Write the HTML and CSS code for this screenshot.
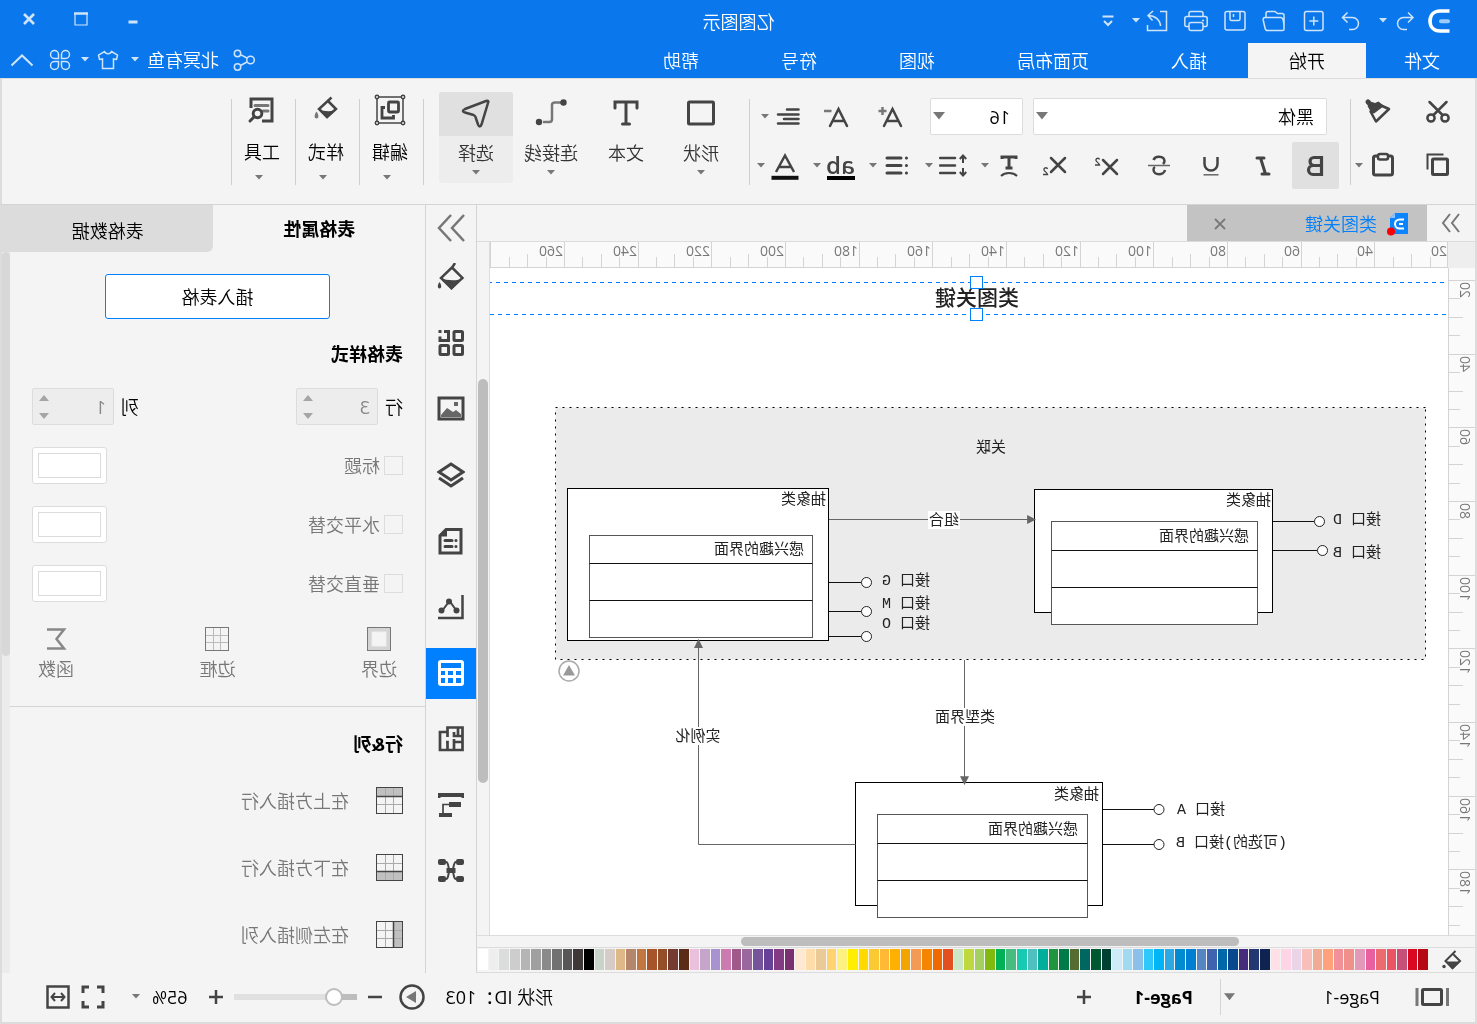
FILE: index.html
```html
<!DOCTYPE html>
<html lang="zh-CN">
<head>
<meta charset="utf-8">
<title>亿图图示</title>
<link rel="stylesheet" href="styles.css">
</head>
<body>
<div class="app">
  <header class="header">
    <div class="titlebar">
      <div class="quick">
        <svg class="logo" viewBox="0 0 24 24" width="24" height="24"><path d="M1.500 2H11C17.500 2 21 6.500 21 12S17.500 22 11 22H1.500" fill="none" stroke="#fff" stroke-width="3.600"/><path d="M3 12.200H10" stroke="#9fcbf9" stroke-width="4" stroke-linecap="round"/></svg>
        <button class="tb" aria-label="撤销"><svg viewBox="0 0 24 24" width="24" height="24"><path d="M9 3.500L4 8.500L9 13.500M4.500 8.500H13.500A6 6 0 0 1 13.500 20.500H10"/></svg></button>
        <button class="tb" aria-label="撤销列表"><svg class="caret-light" viewBox="0 0 8 5" width="8" height="5"><path d="M0 0H8L4 4.500Z"/></svg></button>
        <button class="tb" aria-label="恢复"><svg viewBox="0 0 24 24" width="24" height="24"><path d="M15.500 3.500L20.500 8.500L15.500 13.500M20 8.500H10.500A6 6 0 0 0 10.500 20.500H14"/></svg></button>
        <button class="tb" aria-label="新建"><svg viewBox="0 0 24 24" width="24" height="24"><rect x="3" y="2.500" width="18.500" height="19" rx="2"/><path d="M12.200 7.500V16.500M7.700 12H16.700"/></svg></button>
        <button class="tb" aria-label="打开"><svg viewBox="0 0 24 24" width="24" height="24"><path d="M2 20.500V6.500C2 5 3 4.500 4 4.500H8.500L11 2.500H18C19.500 2.500 20 3.500 20 4.500V8M2 20.500C2 14 3 8.500 5 8.500H21C23 8.500 23 10 22.700 11.500L21 19C20.700 20.500 20 21.500 18.500 21.500H3.500C2.500 21.500 2 21 2 20.500Z"/></svg></button>
        <button class="tb" aria-label="保存"><svg viewBox="0 0 24 24" width="24" height="24"><rect x="2" y="2.500" width="20" height="18.500" rx="2"/><path d="M7 3V10C7 11 7.500 11.500 8.500 11.500H15.500C16.500 11.500 17 11 17 10V3M13.500 5V8"/></svg></button>
        <button class="tb" aria-label="打印"><svg viewBox="0 0 24 24" width="24" height="24"><path d="M5 7.500V4.500C5 3 6 2.500 7 2.500H17C18.500 2.500 19 3.500 19 4.500V7.500M5 17.500H2.500C1.500 17.500 .800 17 .800 16V9.500C.800 8 1.500 7.500 3 7.500H21C22.500 7.500 23.200 8.500 23.200 9.500V16C23.200 17 22.500 17.500 21.500 17.500H19M4 11.500H6"/><rect x="5" y="13.500" width="14" height="8" rx="2"/></svg></button>
        <button class="tb" aria-label="导出"><svg viewBox="0 0 24 24" width="24" height="24"><path d="M9 2.500H2.500V21.500H21.500V16M8.500 17C9 10.500 14 6.500 21 6.500M16 2L21 6.500L16.500 11.500"/></svg></button>
        <button class="tb" aria-label="导出列表"><svg class="caret-light" viewBox="0 0 8 5" width="8" height="5"><path d="M0 0H8L4 4.500Z"/></svg></button>
        <button class="tb" aria-label="更多"><svg viewBox="0 0 12 12" width="12" height="12"><path d="M.500 1.500H11.500M2 6L6 10L10 6" stroke-width="2"/></svg></button>
      </div>
      <h1 class="title">亿图图示</h1>
      <div class="winctl">
        <button class="tb" aria-label="最小化"><svg viewBox="0 0 14 14" width="14" height="14"><path d="M2.500 10H11.500" stroke-width="3"/></svg></button>
        <button class="tb" aria-label="最大化"><svg viewBox="0 0 14 14" width="14" height="14"><path d="M1 1V13H13V1" stroke-width="1.200"/><path d="M0 1.500H14" stroke-width="2.500"/></svg></button>
        <button class="tb" aria-label="关闭"><svg viewBox="0 0 14 14" width="14" height="14"><path d="M2 2L12 12M12 2L2 12" stroke-width="2.600"/></svg></button>
      </div>
    </div>
    <nav class="menubar">
      <a class="menu menu-file" href="#file">文件</a>
      <a class="menu menu-on" href="#home">开始</a>
      <a class="menu" href="#insert">插入</a>
      <a class="menu" href="#layout">页面布局</a>
      <a class="menu" href="#view">视图</a>
      <a class="menu" href="#symbol">符号</a>
      <a class="menu" href="#help">帮助</a>
      <div class="account">
        <button class="tb" aria-label="分享"><svg viewBox="0 0 22 22" width="22" height="22"><circle cx="4.500" cy="11" r="3.800"/><circle cx="17.500" cy="4.500" r="3.200"/><circle cx="17.500" cy="18" r="3.200"/><path d="M8 9L14.500 5.700M8 13L14.500 16.500"/></svg></button>
        <button class="tb user">北冥有鱼 <svg class="caret-light" viewBox="0 0 8 5" width="8" height="5"><path d="M0 0H8L4 4.500Z"/></svg></button>
        <button class="tb skin" aria-label="皮肤"><svg viewBox="0 0 22 22" width="22" height="22"><path d="M7.500 2.500L1.500 6L2.500 10.500L5.500 10V19.500H16.500V10L19.500 10.500L20.500 6L14.500 2.500C13.500 5.500 8.500 5.500 7.500 2.500Z"/></svg> <svg class="caret-light" viewBox="0 0 8 5" width="8" height="5"><path d="M0 0H8L4 4.500Z"/></svg></button>
        <button class="tb" aria-label="应用"><svg viewBox="0 0 22 22" width="22" height="22"><path d="M9.500 9.500H5.500A4 4 0 1 1 9.500 5.500ZM12.500 9.500V5.500A4 4 0 1 1 16.500 9.500ZM9.500 12.500V16.500A4 4 0 1 1 5.500 12.500ZM12.500 12.500H16.500A4 4 0 1 1 12.500 16.500Z"/></svg></button>
        <button class="tb fold" aria-label="收起功能区"><svg viewBox="0 0 24 14" width="24" height="14"><path d="M1.500 12.500L12 2.500L22.500 12.500" stroke-width="2"/></svg></button>
      </div>
    </nav>
  </header>

  <section class="ribbon">
    <div class="clip">
      <div class="clip-row">
        <button class="tool" aria-label="剪切"><svg viewBox="0 0 28 28" width="28" height="28"><g class="ln"><circle cx="7" cy="20" r="3.600"/><circle cx="21" cy="20" r="3.600"/><path d="M5.500 4L18.500 17M22.500 4L9.500 17" stroke-linecap="round"/></g></svg></button>
        <button class="tool painter" aria-label="格式刷"><svg viewBox="0 0 28 28" width="28" height="28"><path class="ln" d="M3 11L12 7L21.500 13.500L16 23.500Z" stroke-linejoin="round"/><path class="fl" d="M8 8L13.500 3.500L17 5L20 4L24.500 8L22 12.500L21.500 15L18 15.500Z"/><path d="M21 7L24 4" stroke="#444" stroke-width="5" stroke-linecap="round"/></svg></button>
      </div>
      <div class="clip-row clip-low">
        <button class="tool" aria-label="复制"><svg viewBox="0 0 28 28" width="28" height="28"><rect class="ln" x="4.500" y="8" width="15" height="15.500" rx="1" stroke-width="3"/><path class="ln" d="M8.500 3.500H24.500V18.500" stroke-width="2"/></svg></button>
        <button class="tool split" aria-label="粘贴"><svg viewBox="0 0 28 28" width="28" height="28"><rect class="ln" x="4.500" y="5" width="19" height="19" rx="2" stroke-width="3"/><rect x="9" y="3" width="10" height="5.500" rx="2" fill="#f4f4f4" stroke="#444" stroke-width="2.500"/></svg><svg class="caret" viewBox="0 0 8 5" width="8" height="5"><path d="M0 0H8L4 4.500Z"/></svg></button>
      </div>
    </div>
    <div class="rule"></div>
    <div class="font">
      <div class="font-top">
        <label class="combo combo-face"><select aria-label="字体"><option>黑体</option></select><svg class="caret" viewBox="0 0 12 8" width="12" height="8"><path d="M0 0H12L6 7.500Z"/></svg></label>
        <label class="combo combo-size"><select aria-label="字号"><option>16</option></select><svg class="caret" viewBox="0 0 12 8" width="12" height="8"><path d="M0 0H12L6 7.500Z"/></svg></label>
        <button class="tool" aria-label="增大字号"><svg viewBox="0 0 28 28" width="28" height="28"><path class="ln" d="M4 23L12.500 6L21 23M7 18H18" stroke-linecap="round"/><path d="M22.500 4V12M18.500 8H26.500" stroke="#777" stroke-width="2.500"/></svg></button>
        <button class="tool dec" aria-label="减小字号"><svg viewBox="0 0 28 28" width="28" height="28"><path class="ln" d="M4 23L12.500 6L21 23M7 18H18" stroke-linecap="round"/><path d="M19.500 8H27" stroke="#777" stroke-width="2.500"/></svg></button>
        <button class="tool split" aria-label="对齐"><svg viewBox="0 0 28 28" width="28" height="28"><path class="ln" d="M4.500 6.500H16M4.500 11.500H25M4.500 16H19M4.500 20.500H25" stroke-linecap="round"/></svg><svg class="caret" viewBox="0 0 8 5" width="8" height="5"><path d="M0 0H8L4 4.500Z"/></svg></button>
      </div>
      <div class="font-low">
        <button class="bold" aria-label="加粗"><svg viewBox="0 0 28 28" width="28" height="28"><path class="ln" d="M7.500 5.500H15A4 4 0 0 1 15 13.500H7.500ZM7.500 13.500H16A4.500 4.500 0 0 1 16 22.500H7.500Z" stroke-width="3.200"/></svg></button>
        <button class="tool" aria-label="斜体"><svg viewBox="0 0 28 28" width="28" height="28"><path class="ln" d="M13 6H20M8 22H15M16.500 6L11.500 22" stroke-width="3" stroke-linecap="round"/></svg></button>
        <button class="tool" aria-label="下划线"><svg viewBox="0 0 28 28" width="28" height="28"><path class="ln" d="M7.500 5V12A6.500 6.500 0 0 0 20.500 12V5"/><path d="M6.500 22.800H21.500" stroke="#666" stroke-width="1.500"/></svg></button>
        <button class="tool" aria-label="删除线"><svg viewBox="0 0 28 28" width="28" height="28"><path class="ln" d="M19.500 8C18 3.500 9 3.500 8.500 9C8.500 10 9 11 10 12M8 18C9 23.500 19.500 24 19.500 17.500C19.500 16 19 15.500 18 15"/><path d="M3 13.500H25" stroke="#666" stroke-width="1.500"/></svg></button>
        <button class="tool" aria-label="上标"><svg viewBox="0 0 28 28" width="28" height="28"><path class="ln" d="M4 8L18 22M18 8L4 22" stroke-linecap="round"/><path class="ln" d="M21.500 7.500C22 5.500 25.500 6 25 8.500C24.500 10 22 11 21.500 13H26" stroke-width="1.300"/></svg></button>
        <button class="tool" aria-label="下标"><svg viewBox="0 0 28 28" width="28" height="28"><path class="ln" d="M4 6L18 20M18 6L4 20" stroke-linecap="round"/><path class="ln" d="M21.500 17C22 15 25.500 15.500 25 18C24.500 19.500 22 20.500 21.500 22.500H26" stroke-width="1.300"/></svg></button>
        <button class="tool split" aria-label="文字方向"><svg viewBox="0 0 28 28" width="28" height="28"><path class="ln" d="M7 7V5H21V7M14 5V16M10.500 16H17.500" stroke-width="3"/><path class="ln" d="M6 24C10 20 18 20 22 24" stroke-width="2"/></svg><svg class="caret" viewBox="0 0 8 5" width="8" height="5"><path d="M0 0H8L4 4.500Z"/></svg></button>
        <button class="tool split" aria-label="行距"><svg viewBox="0 0 28 28" width="28" height="28"><path class="ln" d="M12 6H27M12 13.500H27M12 21H27" stroke-linecap="round"/><path class="ln" d="M4 4V11M4 16V23M.800 7L4 3.500L7.200 7M.800 20L4 23.500L7.200 20" stroke-width="2"/></svg><svg class="caret" viewBox="0 0 8 5" width="8" height="5"><path d="M0 0H8L4 4.500Z"/></svg></button>
        <button class="tool split" aria-label="项目符号"><svg viewBox="0 0 28 28" width="28" height="28"><path class="ln" d="M10 6H24M10 13.500H24M10 21H24M4.500 6H4.600M4.500 13.500H4.600M4.500 21H4.600" stroke-width="3" stroke-linecap="round"/></svg><svg class="caret" viewBox="0 0 8 5" width="8" height="5"><path d="M0 0H8L4 4.500Z"/></svg></button>
        <button class="tool split" aria-label="突出显示"><span class="hl">ab</span><svg class="caret" viewBox="0 0 8 5" width="8" height="5"><path d="M0 0H8L4 4.500Z"/></svg></button>
        <button class="tool split" aria-label="字体颜色"><svg viewBox="0 0 28 28" width="28" height="28"><path class="ln" d="M5 20L14 3.500L23 20M8.500 15H19.500"/><path d="M.500 25.800H27.500" stroke="#111" stroke-width="4"/></svg><svg class="caret" viewBox="0 0 8 5" width="8" height="5"><path d="M0 0H8L4 4.500Z"/></svg></button>
      </div>
    </div>
    <div class="rule"></div>
    <div class="bigs">
      <button class="big"><svg viewBox="0 0 32 32" width="32" height="32"><rect class="ln" x="3.500" y="5" width="25" height="22" stroke-width="3" rx="1"/></svg><span>形状</span><svg class="caret" viewBox="0 0 8 5" width="8" height="5"><path d="M0 0H8L4 4.500Z"/></svg></button>
      <button class="big"><svg viewBox="0 0 32 32" width="32" height="32"><path class="ln" d="M5 11V5H27V11M16 5V27M12.500 27H19.500" stroke-width="3" stroke-linecap="round"/></svg><span>文本</span></button>
      <button class="big"><svg viewBox="0 0 32 32" width="32" height="32"><path d="M6 5.500H12C14 5.500 15 6.500 15 8V22C15 24 16 25 17.500 25H24" fill="none" stroke="#777" stroke-width="2.500"/><circle class="fl" cx="3.500" cy="5.500" r="3.200"/><circle class="fl" cx="28" cy="25" r="3.200"/></svg><span>连接线</span><svg class="caret" viewBox="0 0 8 5" width="8" height="5"><path d="M0 0H8L4 4.500Z"/></svg></button>
      <button class="big big-on"><svg viewBox="0 0 32 32" width="32" height="32"><path class="ln" d="M4 6C3 4 4 3.500 6 4L27 12C30 13.500 29.500 15 27 15.500L18.500 18C17.500 18.500 17 19 16.500 20L14 27.500C13 30 11.500 30 10.500 27.500Z" stroke-width="2.500"/></svg><span>选择</span><svg class="caret" viewBox="0 0 8 5" width="8" height="5"><path d="M0 0H8L4 4.500Z"/></svg></button>
    </div>
    <div class="cmds">
      <button class="cmd"><svg viewBox="0 0 32 32" width="32" height="32"><g class="ln"><rect x="3" y="3" width="26" height="26" stroke-width="1.500"/><rect x="7.500" y="8" width="10" height="10" rx="1" stroke-width="2.800"/><path d="M12.500 21V24H24V13.500H21" stroke-width="2.800"/></g><g fill="#f4f4f4" stroke="#444" stroke-width="1.500"><circle cx="3" cy="3" r="1.700"/><circle cx="29" cy="3" r="1.700"/><circle cx="3" cy="29" r="1.700"/><circle cx="29" cy="29" r="1.700"/></g></svg><span>编辑</span><svg class="caret" viewBox="0 0 8 5" width="8" height="5"><path d="M0 0H8L4 4.500Z"/></svg></button>
      <button class="cmd"><svg viewBox="0 0 32 32" width="32" height="32"><path class="ln" d="M10.500 3.500L23 15L15 23L6 15L13.500 7.500"/><path class="fl" d="M5.500 15.500C10 18 18 17.500 23.500 15.500L15 24.500Z"/><path d="M25.500 17.500C28 21 28 24.500 25.500 24.500S23 21 25.500 17.500Z" fill="#777"/></svg><span>样式</span><svg class="caret" viewBox="0 0 8 5" width="8" height="5"><path d="M0 0H8L4 4.500Z"/></svg></button>
      <button class="cmd"><svg viewBox="0 0 32 32" width="32" height="32"><path class="ln" d="M16 27H6V5H27V14" stroke-width="3"/><path d="M10 11.500H23M10 17H15" stroke="#777" stroke-width="3" stroke-linecap="round"/><circle class="ln" cx="20.500" cy="19.500" r="4.300" stroke-width="3"/><path class="ln" d="M24 23L28 27" stroke-width="3" stroke-linecap="round"/></svg><span>工具</span><svg class="caret" viewBox="0 0 8 5" width="8" height="5"><path d="M0 0H8L4 4.500Z"/></svg></button>
      <div class="rule"></div>
    </div>
  </section>

  <main class="main">
    <section class="editor">
      <div class="doctabs">
        <button class="more" aria-label="展开符号库"><svg viewBox="0 0 22 22" width="22" height="22"><path d="M3 2L10 11L3 20M12 2L19 11L12 20" fill="none" stroke="#777" stroke-width="2"/></svg></button>
        <div class="doctab">
          <svg viewBox="0 0 24 24" width="24" height="24"><path d="M4 1H16L21 6V22H4C3 22 3 21.500 3 21V2C3 1.500 3 1 4 1Z" fill="#0a84ff"/><path d="M16 1L21 6H16Z" fill="#8cc4ff"/><path d="M7 7.500H11.500A4.500 4.500 0 0 1 11.500 16.500H7" fill="none" stroke="#fff" stroke-width="2"/><path d="M8 12H12" stroke="#fff" stroke-width="2"/><circle cx="20" cy="19.500" r="4" fill="#f00"/></svg>
          <a href="#doc">类图关键</a>
          <button class="close" aria-label="关闭标签"><svg viewBox="0 0 12 12" width="12" height="12"><path d="M1 1L11 11M11 1L1 11" stroke="#777" stroke-width="1.800"/></svg></button>
        </div>
      </div>
      <div class="stage">
        <div class="corner"></div>
        <svg class="ruler-h" id="rulerH"></svg>
        <svg class="ruler-v" id="rulerV"></svg>
        <div class="canvas">
          <svg class="diagram" viewBox="29 268 958 667" width="958" height="667">
            <defs>
              <marker id="tip" viewBox="0 0 8 8" refX="7" refY="4" markerWidth="9" markerHeight="9" markerUnits="userSpaceOnUse" orient="auto"><path d="M0 0L8 4L0 8Z" fill="#666"/></marker>
            </defs>
            <path class="guide" d="M33 282.500H987M31 314.500H987"/>
            <text class="heading" x="500" y="305" text-anchor="middle">类图关键</text>
            <g class="grip"><rect x="494.500" y="276.500" width="12" height="12"/><rect x="494.500" y="308.500" width="12" height="12"/></g>
            <rect class="zone" x="51.500" y="407.500" width="870" height="252"/>
            <text x="486" y="452" text-anchor="middle">关联</text>

            <rect class="outer" x="204.500" y="489.500" width="238" height="123"/>
            <text x="206" y="505">抽象类</text>
            <rect class="inner" x="219.500" y="521.500" width="206" height="103"/>
            <path class="row" d="M219.500 550.500H425.500M219.500 587.500H425.500"/>
            <text x="228" y="541">感兴趣的界面</text>
            <path class="row" d="M163 521.500H204M160 550.500H204"/>
            <circle class="ball" cx="157.500" cy="521.500" r="5"/><circle class="ball" cx="154.500" cy="550.500" r="5"/>
            <text x="96" y="524">接口 D</text><text x="96" y="557">接口 B</text>

            <rect class="outer" x="648.500" y="488.500" width="261" height="152"/>
            <text x="651" y="504">抽象类</text>
            <rect class="inner" x="664.500" y="535.500" width="223" height="102"/>
            <path class="row" d="M664.500 563.500H887.500M664.500 600.500H887.500"/>
            <text x="673" y="554">感兴趣的界面</text>
            <path class="row" d="M616 582.500H648M616 611.500H648M616 636.500H648"/>
            <circle class="ball" cx="610.500" cy="582.500" r="5"/><circle class="ball" cx="610.500" cy="611.500" r="5"/><circle class="ball" cx="610.500" cy="636.500" r="5"/>
            <text x="547" y="585">接口 G</text><text x="547" y="608">接口 M</text><text x="547" y="628">接口 O</text>

            <rect class="outer" x="374.500" y="782.500" width="247" height="123"/>
            <text x="378" y="799">抽象类</text>
            <rect class="inner" x="389.500" y="814.500" width="210" height="103"/>
            <path class="row" d="M389.500 843.500H599.500M389.500 880.500H599.500"/>
            <text x="399" y="834">感兴趣的界面</text>
            <path class="row" d="M323 809.500H374M323 844.500H374"/>
            <circle class="ball" cx="318" cy="809.500" r="5"/><circle class="ball" cx="318" cy="844.500" r="5"/>
            <text x="252" y="814">接口 A</text><text x="190" y="847">(可选的)接口 B</text>

            <g class="link">
              <path d="M648 519.500H442"/>
              <path d="M512.500 660V784"/>
              <path d="M621.500 844.500H778.500V640"/>
            </g>
            <g class="tag"><rect x="517" y="511" width="32" height="18"/><rect x="481" y="708" width="62" height="18"/><rect x="755" y="727" width="48" height="18"/></g>
            <text x="533" y="525" text-anchor="middle">组合</text>
            <text x="512" y="722" text-anchor="middle">类型界面</text>
            <text x="779" y="741" text-anchor="middle">实例化</text>
            <circle class="badge" cx="908" cy="671" r="10"/><path d="M902 675.500L908 665L914 675.500Z" fill="#999"/>
          </svg>
        </div>
        <div class="vscroll"><div class="vthumb"></div></div>
      </div>
      <div class="hscroll"><div class="hthumb"></div></div>
      <div class="palette">
        <button class="bucket" aria-label="填充"><svg viewBox="0 0 24 24" width="24" height="24"><path class="ln" d="M8.500 2L18.500 12L11.500 19L4 12L10.500 5.500" stroke-width="2"/><path class="fl" d="M3.500 12.500H19L11.500 20.500Z"/><circle class="fl" cx="20" cy="17.500" r="1.700"/></svg></button>
        <div class="swatches" id="swatches"></div>
      </div>
    </section>

    <nav class="rail">
      <button class="rail-fold" aria-label="折叠面板"><svg viewBox="0 0 28 28" width="28" height="28"><path d="M1 1L13 14L1 27M14 1L26 14L14 27" fill="none" stroke="#777" stroke-width="2.500"/></svg></button>
      <button aria-label="填充"><svg viewBox="0 0 28 28" width="28" height="28"><path class="ln" d="M10 0L12.500 4L24 15L13.500 25L2.500 15L13 4.500"/><path class="fl" d="M2 15C8 18.500 18 17.500 25 15L13.500 27Z"/><path class="fl" d="M25.500 19C28 22.500 27.500 25.500 25.500 25.500S23 22.500 25.500 19Z"/></svg></button>
      <button aria-label="符号"><svg viewBox="0 0 28 28" width="28" height="28"><g class="ln thick"><rect x="2.500" y="2.500" width="8.500" height="9" rx="1"/><rect x="2.500" y="16.500" width="8.500" height="9" rx="1"/><rect x="16.500" y="16.500" width="8.500" height="9" rx="1"/><path d="M21 2.500H16.500V11.500H25V7.500M23.500 2.500H26.500"/></g></svg></button>
      <button aria-label="图片"><svg viewBox="0 0 28 28" width="28" height="28"><rect class="ln" x="2" y="3" width="24" height="21" stroke-width="3"/><path d="M4 21V19L9 15L12 17L18 13L24 20V22H4Z" fill="#666"/><rect x="7" y="7" width="4" height="4" fill="#666"/></svg></button>
      <button aria-label="图层"><svg viewBox="0 0 28 28" width="28" height="28"><path class="ln" d="M14 3L26 11L14 19L2 11ZM2 17L14 25L26 17" stroke-width="3"/></svg></button>
      <button aria-label="备注"><svg viewBox="0 0 28 28" width="28" height="28"><path class="ln" d="M4 2.500H19L25 8.500V26H4Z" stroke-width="3"/><path class="fl" d="M18 2V9.500H25Z"/><path class="ln" d="M9 13.500H9.100M13 13.500H20M9 19.500H9.100M13 19.500H20" stroke-width="3" stroke-linecap="round"/></svg></button>
      <button aria-label="图表"><svg viewBox="0 0 28 28" width="28" height="28"><path class="ln" d="M9 17L15.500 8L23 18" stroke-width="2"/><path class="ln" d="M2.500 2V25H27"/><circle class="fl" cx="8.500" cy="17.500" r="3"/><circle class="fl" cx="16" cy="8.500" r="3"/><circle class="fl" cx="23.500" cy="17.500" r="3"/></svg></button>
      <button class="rail-on" aria-label="表格"><svg viewBox="0 0 28 28" width="28" height="28"><rect x="1" y="1" width="26" height="26" rx="3" fill="#fff"/><path d="M4 4H24V9H4ZM4 12H9V16H4ZM12 12H17V16H12ZM20 12H24V16H20ZM4 19H9V24H4ZM12 19H17V24H12ZM20 19H24V24H20Z" fill="#0080ff"/></svg></button>
      <button aria-label="平面图"><svg viewBox="0 0 28 28" width="28" height="28"><path class="ln" d="M2.500 2.500H17.500V7H25V25H2.500ZM2.500 11H11V7M17.500 7V12M7 3V11M2.500 17H11V14M11 17V25M17.500 25V17H19" stroke-width="2.700"/></svg></button>
      <button aria-label="甘特图"><svg viewBox="0 0 28 28" width="28" height="28"><path class="fl" d="M1 2H27V7H25L24 6H4L3 7H1ZM4 11H16V16H4ZM13 22H26V26H13Z"/><path class="ln" d="M16 13.500H22V22" stroke-width="1.700"/></svg></button>
      <button aria-label="思维导图"><svg viewBox="0 0 28 28" width="28" height="28"><path class="ln" d="M6 5H9C12 5 11 13 13 13.500H15C17 13.500 16 5 19 5H23M6 22H9C12 22 11 14 13 13.500M23 22H19C16 22 17 14 15 13.500" stroke-width="2"/><rect class="fl" x="1" y="2" width="8" height="6" rx="2"/><rect class="fl" x="19" y="2" width="8" height="6" rx="2"/><rect class="fl" x="1" y="19" width="8" height="6" rx="2"/><rect class="fl" x="19" y="19" width="8" height="6" rx="2"/><rect class="fl" x="9.500" y="11" width="9" height="5"/></svg></button>
    </nav>

    <aside class="panel">
      <div class="ptabs"><button class="ptab ptab-on">表格属性</button><button class="ptab">表格数据</button></div>
      <div class="pbody">
        <div class="pcontent">
          <div class="block">
            <button class="insert">插入表格</button>
            <h2>表格样式</h2>
            <div class="spins">
              <label class="spin">行<span class="spin-box"><input type="number" value="3" disabled><svg viewBox="0 0 10 24" width="10" height="24"><path d="M0 6L5 0L10 6ZM0 18L5 24L10 18Z" fill="#a5a5a5"/></svg></span></label>
              <label class="spin">列<span class="spin-box"><input type="number" value="1" disabled><svg viewBox="0 0 10 24" width="10" height="24"><path d="M0 6L5 0L10 6ZM0 18L5 24L10 18Z" fill="#a5a5a5"/></svg></span></label>
            </div>
            <div class="opt"><label><input type="checkbox" disabled>标题</label><button class="color" aria-label="标题颜色"><span></span></button></div>
            <div class="opt"><label><input type="checkbox" disabled>水平交替</label><button class="color" aria-label="水平交替颜色"><span></span></button></div>
            <div class="opt"><label><input type="checkbox" disabled>垂直交替</label><button class="color" aria-label="垂直交替颜色"><span></span></button></div>
            <div class="trio">
              <button><svg viewBox="0 0 24 24" width="24" height="24"><rect x=".500" y=".500" width="23" height="23" fill="#d4d4d4" stroke="#777"/><rect x="5" y="5" width="14" height="14" fill="#f4f4f4" stroke="#eee"/></svg>边界</button>
              <button><svg viewBox="0 0 24 24" width="24" height="24"><path d="M1 8.500H23M1 15.500H23M8.500 1V23M15.500 1V23" stroke="#bbb"/><rect x=".500" y=".500" width="23" height="23" fill="none" stroke="#777"/></svg>边框</button>
              <button><svg viewBox="0 0 24 24" width="24" height="24"><path d="M21 2.500H4L11.500 12L4 21.500H21" fill="none" stroke="#888" stroke-width="2.500"/></svg>函数</button>
            </div>
          </div>
          <div class="block block-2">
            <h2>行&amp;列</h2>
            <button class="act"><svg viewBox="0 0 27 27" width="27" height="27"><rect x="1" y="1" width="25" height="9" fill="#c0c0c0"/><path d="M9.500 1V26M17.500 1V26M1 17.500H26" stroke="#aaa"/><path d="M0 9.500H27" stroke="#444" stroke-width="1.500"/><rect x=".500" y=".500" width="26" height="26" fill="none" stroke="#444"/></svg>在上方插入行</button>
            <button class="act"><svg viewBox="0 0 27 27" width="27" height="27"><rect x="1" y="17" width="25" height="9" fill="#c0c0c0"/><path d="M9.500 1V26M17.500 1V26M1 9.500H26" stroke="#aaa"/><path d="M0 17.500H27" stroke="#444" stroke-width="1.500"/><rect x=".500" y=".500" width="26" height="26" fill="none" stroke="#444"/></svg>在下方插入行</button>
            <button class="act"><svg viewBox="0 0 27 27" width="27" height="27"><rect x="1" y="1" width="9" height="25" fill="#c0c0c0"/><path d="M1 9.500H26M1 17.500H26M17.500 1V26" stroke="#aaa"/><path d="M9.500 0V27" stroke="#444" stroke-width="1.500"/><rect x=".500" y=".500" width="26" height="26" fill="none" stroke="#444"/></svg>在左侧插入列</button>
          </div>
        </div>
        <div class="pscroll"><div class="pthumb"></div></div>
      </div>
    </aside>
  </main>

  <footer class="status">
    <button class="pages" aria-label="页面视图"><svg viewBox="0 0 34 20" width="34" height="20"><rect x="7.500" y="2.500" width="19" height="15" fill="none" stroke="#444" stroke-width="3" rx="1"/><path d="M1.500 1V19M32 1V19" stroke="#777" stroke-width="3"/></svg></button>
    <label class="pagesel"><select aria-label="页面"><option>Page-1</option></select><svg class="caret" viewBox="0 0 12 8" width="11" height="8"><path d="M0 0H12L6 7.500Z"/></svg></label>
    <a class="page-on" href="#page1">Page-1</a>
    <button class="st" aria-label="新增页面"><svg viewBox="0 0 16 16" width="16" height="16"><path d="M8 1V15M1 8H15" stroke="#444" stroke-width="2.500"/></svg></button>
    <div class="info">
      <span class="shape-id">形状 <span class="num">ID：103</span></span>
      <button class="st" aria-label="演示"><svg viewBox="0 0 26 26" width="26" height="26"><circle cx="13" cy="13" r="11.500" fill="none" stroke="#444" stroke-width="2.500"/><path d="M9 7L19 13L9 19Z" fill="#777"/></svg></button>
      <button class="st out" aria-label="缩小"><svg viewBox="0 0 16 16" width="16" height="16"><path d="M1 8H15" stroke="#444" stroke-width="2.500"/></svg></button>
      <input class="zoom" type="range" min="0" max="100" value="14" aria-label="缩放">
      <button class="st" aria-label="放大"><svg viewBox="0 0 16 16" width="16" height="16"><path d="M8 1V15M1 8H15" stroke="#444" stroke-width="2.500"/></svg></button>
      <button class="pct">65% <svg class="caret" viewBox="0 0 8 5" width="8" height="5"><path d="M0 0H8L4 4.500Z"/></svg></button>
      <button class="st" aria-label="全屏"><svg viewBox="0 0 24 24" width="24" height="24"><path class="ln" d="M2 8V2H8M16 2H22V8M22 16V22H16M8 22H2V16" stroke-width="3"/></svg></button>
      <button class="st" aria-label="适合宽度"><svg viewBox="0 0 24 24" width="24" height="24"><rect class="ln" x="1.500" y="1.500" width="21" height="21" stroke-width="2.500"/><path class="ln" d="M6 12H18M9 8L5.500 12L9 16M15 8L18.500 12L15 16" stroke-width="2"/></svg></button>
    </div>
  </footer>
</div>
<script src="app.js"></script>
</body>
</html>
```
FILE: styles.css
```css
* { box-sizing: border-box; }
body {
  margin: 0;
  background: #f4f4f4;
  color: #000;
  font: 350 18px/24px "Open Sans", "Noto Sans CJK SC", sans-serif;
}
button, select, input { font: inherit; color: inherit; }
button { border: 0; padding: 0; background: none; }
a { color: inherit; text-decoration: none; }
h1, h2 { margin: 0; }
svg { display: block; flex: none; }

/* The window is presented flipped left to right */
.app {
  display: flex;
  flex-direction: column;
  height: 100vh;
  transform: scaleX(-1);
}
.ln { fill: none; stroke: #444; }
.ln:not([stroke-width]) { stroke-width: 2.5px; }
.ln.thick { stroke-width: 3px; }
.fl { fill: #444; }
.caret { fill: #777; }

/* Latin letters and digits need the regular weight */
.combo-size select, .spin-box input, .pagesel select, .pct, .num { font-weight: 400; }

/* header */
.header { background: #0a78ec; color: #fff; }
.titlebar {
  display: grid;
  grid-template-columns: 1fr auto 1fr;
  align-items: center;
  height: 43px;
}
.quick {
  display: grid;
  grid-template-columns: 40px 28px 16px 48px 26px 54px 24px 54px 24px 18px 38px;
  align-items: center;
  justify-items: center;
  padding: 0 0 2px 18px;
}
.tb svg { fill: none; stroke: #cfe4fb; stroke-width: 1.5px; }
.tb svg.caret-light { fill: #cfe4fb; stroke: none; }
.title { font-size: 18px; font-weight: 350; }
.winctl { display: flex; justify-content: flex-end; padding: 0 3px 6px 0; }
.winctl .tb { width: 52px; display: flex; justify-content: center; }
.menubar { display: flex; height: 35px; }
.menu { padding: 6px 41px 0; }
.menu-file { padding-left: 37px; padding-right: 38px; }
.menu-on { background: #f4f4f4; color: #000; }
.account { display: flex; align-items: center; margin-left: auto; padding: 0 10px 2px 0; }
.user { display: flex; align-items: center; gap: 8px; margin-left: 14px; }
.skin { display: flex; align-items: center; gap: 8px; margin: 0 10px 0 12px; }
.fold { margin-left: 15px; }

/* ribbon */
.ribbon {
  display: flex;
  height: 127px;
  border: solid #dcdcdc;
  border-width: 1px 2px;
  border-bottom-color: #d4d4d4;
}
.rule { width: 1px; height: 86px; margin-top: 20px; background: #cfcfcf; }
.clip { width: 124px; padding: 19px 0 0 23px; }
.clip-row { display: flex; }
.clip-low { padding-top: 25px; }
.painter { margin-left: 32px; }
.tool { width: 28px; display: flex; justify-content: center; flex: none; }
.split { width: 44px; display: flex; align-items: center; justify-content: flex-start; gap: 6px; }
.clip .split { margin-left: 27px; }
.font { width: 600px; padding: 19px 0 0 11px; }
.font-top { display: flex; align-items: center; padding-left: 12px; }
.combo { position: relative; height: 37px; }
.combo-face { width: 294px; margin-right: 10px; }
.combo-size { width: 93px; margin-right: 25px; }
.combo select {
  appearance: none;
  width: 100%;
  height: 100%;
  padding: 0 24px 0 12px;
  border: 1px solid #dcdcdc;
  border-radius: 2px;
  background: #fff;
}
.combo .caret { position: absolute; right: 3px; top: 14px; }
.font-top .dec { margin: 0 20px 0 26px; }
.font-low { display: flex; align-items: center; gap: 12px; padding-top: 7px; }
.font-low .tool:not(.split) { margin: 0 6px; width: 28px; }
.bold {
  display: grid;
  place-items: center;
  width: 47px;
  height: 47px;
  margin-right: -3px;
  border-radius: 2px;
  background: #e0e0e0;
}
.hl {
  width: 28px;
  height: 28px;
  border-bottom: 4px solid #000;
  color: #444;
  font: 600 24px/26px "Open Sans", sans-serif;
}
.bigs { display: flex; gap: 1px; padding: 13px 15px 0 11px; }
.big {
  display: flex;
  flex-direction: column;
  align-items: center;
  width: 74px;
  height: 91px;
  padding-top: 5px;
  border-radius: 2px;
  color: #333;
}
.big span { margin: 12px 0 5px; }
.big-on { background: linear-gradient(#e0e0e0 44px, #ededed 44px); }
.cmds { display: flex; }
.cmd {
  display: flex;
  flex-direction: column;
  align-items: center;
  width: 64px;
  height: 86px;
  margin-top: 20px;
  padding-left: 3px;
  border-left: 1px solid #cfcfcf;
}
.cmd svg:first-child { margin-top: -5px; }
.cmd span { margin: 14px 0 11px; }
.cmd .caret { margin-left: 5px; }

/* main */
.main { display: flex; flex: 1; min-height: 0; border: solid #dcdcdc; border-width: 0 2px; }
.editor { display: flex; flex-direction: column; flex: 1; min-width: 0; }
.doctabs { display: flex; height: 36px; }
.more { width: 48px; padding-left: 13px; }
.doctab {
  display: flex;
  align-items: center;
  width: 240px;
  padding: 2px 27px 0 16px;
  background: #c3c3c3;
  color: #0080ff;
}
.doctab a { margin-left: 10px; }
.close { margin-left: auto; }
.stage {
  display: grid;
  grid-template: 26px 1fr / 27px 1fr 13px;
  flex: 1;
  min-height: 0;
  border-top: 1px solid #dcdcdc;
}
.corner { background: #eee; }
.ruler-h {
  width: 100%;
  height: 26px;
  min-width: 0;
  border: solid #d4d4d4;
  border-width: 0 0 1px 1px;
  background: #fafafa;
}
.ruler-v {
  grid-row: 2;
  grid-column: 1;
  width: 27px;
  height: 100%;
  border-right: 1px solid #d4d4d4;
  background: #fafafa;
}
.ruler-h text, .ruler-v text { font-size: 14px; font-weight: 400; fill: #777; }
.tick { fill: none; stroke: #d4d4d4; shape-rendering: crispEdges; }
.canvas { grid-row: 2; grid-column: 2; overflow: hidden; min-width: 0; min-height: 0; background: #fff; }
.vscroll { grid-row: 1 / 3; grid-column: 3; border-left: 1px solid #dcdcdc; padding-top: 137px; }
.vthumb { width: 10px; height: 404px; margin-left: 1px; border-radius: 5px; background: #bdbdbd; }
.hscroll { height: 13px; border: solid #dcdcdc; border-width: 1px 0; padding: 1px 0 0 236px; }
.hthumb { width: 498px; height: 9px; border-radius: 5px; background: #bdbdbd; }
.palette { display: flex; align-items: flex-start; height: 25px; padding-top: 1px; border-bottom: 1px solid #dcdcdc; }
.bucket { width: 47px; padding-left: 11px; }
.swatches { display: flex; flex: 1; gap: 1px; height: 21px; padding-right: 2px; }
.swatches i { flex: 1; }

/* diagram */
.diagram text { font: 400 15px "Liberation Mono", "Noto Sans CJK SC", monospace; fill: #222; }
.diagram .heading { font-size: 21px; font-weight: 500; }
.guide { fill: none; stroke: #0080ff; stroke-dasharray: 4 4; }
.grip { fill: #fff; stroke: #0080ff; }
.zone { fill: #ebebeb; stroke: #000; stroke-dasharray: 2 5; }
.outer { fill: #fff; stroke: #000; }
.inner { fill: #fff; stroke: #555; }
.row { fill: none; stroke: #111; }
.ball { fill: #fff; stroke: #222; }
.link { fill: none; stroke: #666; }
.link path { marker-end: url(#tip); }
.tag { fill: #fff; }
.badge { fill: #fff; stroke: #aaa; stroke-width: 1.5px; }

/* icon rail */
.rail {
  display: flex;
  flex-direction: column;
  gap: 15px;
  width: 51px;
  border-left: 1px solid #d4d4d4;
}
.rail button { display: grid; place-items: center; height: 51px; flex: none; padding-bottom: 2px; }
.rail .rail-fold { height: 46px; margin-bottom: -14px; padding: 0; }
.rail .rail-on { background: #0080ff; }

/* properties panel */
.panel { display: flex; flex-direction: column; width: 424px; border-left: 1px solid #d4d4d4; }
.ptabs { display: flex; height: 47px; flex: none; }
.ptab { flex: 1; }
.ptab + .ptab { background: #dcdcdc; border-radius: 0 0 0 6px; padding-top: 4px; }
.ptab-on, h2 { font-size: 18px; font-weight: 700; }
.pbody { display: flex; flex: 1; min-height: 0; }
.pcontent { flex: 1; overflow: hidden; }
.pscroll { width: 8px; background: #ececec; }
.pthumb { height: 404px; border-radius: 4px; background: #d8d8d8; }
.block { padding: 22px 22px 25px; border-bottom: 1px solid #d4d4d4; }
.insert {
  display: block;
  width: 225px;
  height: 45px;
  margin: 0 auto 23px 73px;
  border: 1px solid #0080ff;
  border-radius: 3px;
  background: #fff;
}
.spins { display: flex; justify-content: space-between; margin: 22px 0; }
.spin { display: flex; align-items: center; gap: 7px; }
.spin-box {
  display: flex;
  align-items: center;
  justify-content: space-between;
  width: 82px;
  height: 37px;
  padding: 0 6px 0 7px;
  border: 1px solid #dcdcdc;
  border-radius: 2px;
  background: #ededed;
  color: #888;
}
.spin-box input { width: 40px; border: 0; padding: 0; background: none; appearance: textfield; }
.opt { display: flex; justify-content: space-between; align-items: center; height: 37px; margin-bottom: 22px; color: #777; }
.opt label { display: flex; align-items: center; gap: 4px; }
.opt input { appearance: none; width: 19px; height: 19px; margin: 0; border: 1px solid #dcdcdc; }
.color { width: 75px; height: 37px; padding: 5px; border: 1px solid #dcdcdc; border-radius: 3px; background: #fff; }
.color span { display: block; height: 25px; border: 1px solid #dcdcdc; }
.trio { display: flex; justify-content: space-between; padding: 3px 6px 0; color: #777; }
.trio button { display: flex; flex-direction: column; align-items: center; gap: 6px; }
.block-2 { border: 0; padding-top: 25px; }
.act { display: flex; align-items: center; gap: 27px; height: 27px; color: #777; }
h2 + .act { margin-top: 31px; }
.act + .act { margin-top: 40px; }

/* status bar */
.status {
  display: flex;
  align-items: center;
  height: 51px;
  padding: 0 44px 2px 26px;
  border: solid #dcdcdc;
  border-width: 0 2px 2px;
}
.pagesel {
  position: relative;
  display: flex;
  align-items: center;
  width: 163px;
  height: 36px;
  margin: 0 27px 0 32px;
  border-right: 1px solid #d4d4d4;
}
.pagesel select { appearance: none; width: 100%; border: 0; padding: 0 0 0 3px; background: none; }
.pagesel .caret { position: absolute; right: 3px; top: 14px; }
.page-on { font-weight: 700; }
.page-on + .st { margin-left: 42px; }
.info { display: flex; align-items: center; margin-left: auto; }
.shape-id { margin-right: 20px; }
.out { margin: 0 10px 0 16px; }
.zoom {
  appearance: none;
  width: 123px;
  height: 18px;
  margin: 0 10px 0 0;
  background: linear-gradient(90deg, #bdbdbd 20px, #e0e0e0 20px) center / 100% 6px no-repeat;
  border-radius: 3px;
}
.zoom::-webkit-slider-thumb {
  appearance: none;
  width: 18px;
  height: 18px;
  border: 2px solid #bdbdbd;
  border-radius: 50%;
  background: #fff;
}
.pct { display: flex; align-items: center; gap: 12px; margin: 0 27px 0 21px; }
.pct + .st { margin-right: 11px; }
```
FILE: app.js
```js
// Palette, in the order of the colour bar
const colors = (
  'b70614 da0820 c75078 ea5464 ec6b70 e8609f e298b6 ef918a f19099 ffa17a f0ab94 f7beba ebd4e7 ffd5e5 ffe0e6 ' +
  '0f2350 233870 452c7c 08488f 0068a8 4063b0 5685c4 007fd2 008bd0 2ea8e4 00b5f5 2fc8fb 8bc0ea a0d9f0 ceebf7 ' +
  '004033 005830 006660 566b30 007a49 1f9540 00ae9c 50bfc0 18cbb0 48bb80 00b255 80ba10 a3d060 c0d840 cce7c8 ' +
  'e3501f ee6a00 f38500 f39a55 f2a500 ffb000 ffb937 fac934 ffd900 ffee00 fdf280 ffd370 eacb98 ffddab fde9d2 ' +
  '7a3170 833c84 674195 765499 9a689f a05a8a cc7bb0 a893d0 c5a5ca eac1dc ' +
  '5b2b18 763b30 944e29 a85429 c17740 b4866b dfb888 d6cbc6 c9d3ca ' +
  '000000 3f3838 585656 717171 8a8a8a 9fa09f b4b5b4 cccdcc dbdcdc eeeeee ffffff'
).split(' ');
document.getElementById('swatches').innerHTML =
  colors.map(c => `<i style="background:#${c}"></i>`).join('');

// Rulers: a long tick and a label every 20 mm, a short one every 5 mm
const step = 221 / 12;
const rulerH = document.getElementById('rulerH');
const rulerV = document.getElementById('rulerV');

function ruler(size, offset, tick, label) {
  let ticks = '', labels = '';
  for (let k = 0; k * step + offset < size; k++) {
    const p = Math.round(k * step) + offset;
    ticks += tick(p, k % 4 === 0 ? 26 : k % 2 === 0 ? 14 : 11);
    if (k % 4 === 0 && p + 32 < size) labels += label(p, 20 + k * 5);
  }
  return `<path class="tick" d="${ticks}"/>${labels}`;
}
function drawRulers() {
  const w = rulerH.getBoundingClientRect().width;
  const h = rulerV.getBoundingClientRect().height;
  rulerH.innerHTML = ruler(w, -2,
    (p, len) => `M${p + 0.5} 26V${26 - len}`,
    (p, n) => `<text x="${p + 2}" y="14">${n}</text>`);
  rulerV.innerHTML = ruler(h, 12,
    (p, len) => `M26 ${p + 0.5}H${26 - len}`,
    (p, n) => `<text transform="translate(15 ${p + 2}) rotate(-90)" text-anchor="end">${n}</text>`);
}
drawRulers();
addEventListener('resize', drawRulers);
```
